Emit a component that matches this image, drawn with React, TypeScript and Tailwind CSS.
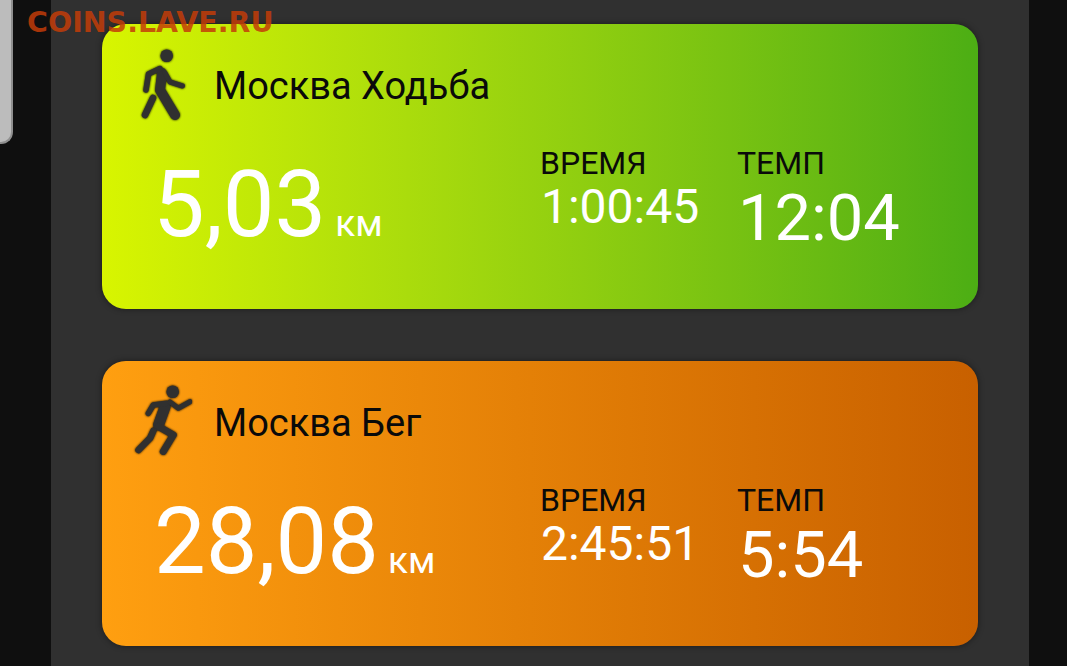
const WalkIcon = () => (
  <svg width="60" height="72" viewBox="0 0 60 72" fill="none" className="block drop-shadow-[0_0_1px_#000]">
    <circle cx="34.7" cy="7.7" r="6.3" fill="#303030" />
    <path d="M30 25 L28 42 L43 67" stroke="#303030" strokeWidth="10" strokeLinecap="round" strokeLinejoin="round" />
    <path d="M28 20.5 L16.5 26 L14 42" stroke="#303030" strokeWidth="5.5" strokeLinecap="round" strokeLinejoin="round" />
    <path d="M33 25 L38 34 L50.5 38" stroke="#303030" strokeWidth="5" strokeLinecap="round" strokeLinejoin="round" />
    <path d="M21 50 L13 67" stroke="#303030" strokeWidth="6.5" strokeLinecap="round" />
  </svg>
);

const RunIcon = () => (
  <svg width="60" height="72" viewBox="0 0 60 72" fill="none" className="block drop-shadow-[0_0_1px_#000]">
    <circle cx="40.7" cy="6.7" r="6.3" fill="#303030" />
    <path d="M33 22 L26.5 40" stroke="#303030" strokeWidth="11" strokeLinecap="round" />
    <path d="M26.5 41.5 L41.3 50 L31.3 66.5" stroke="#303030" strokeWidth="7" strokeLinecap="round" strokeLinejoin="round" />
    <path d="M34.7 18.3 L21.3 20 L16.3 28.3" stroke="#303030" strokeWidth="5.5" strokeLinecap="round" strokeLinejoin="round" />
    <path d="M38 17 L46.3 23.3 L58 16.7" stroke="#303030" strokeWidth="5" strokeLinecap="round" strokeLinejoin="round" />
    <path d="M21.3 46 L18 53.3 L6.5 65" stroke="#303030" strokeWidth="6.5" strokeLinecap="round" strokeLinejoin="round" />
  </svg>
);

type ActivityCardPropsT = {
  title: string;
  icon: React.ReactNode;
  distance: string;
  distanceClass: string;
  time: string;
  pace: string;
  gradient: string;
  spaced?: boolean;
};

const ActivityCard = ({
  title,
  icon,
  distance,
  distanceClass,
  time,
  pace,
  gradient,
  spaced,
}: ActivityCardPropsT) => (
  <div className={`h-[285px] rounded-[24px] pl-[30px] pt-[24px] shadow-[0_0_6px_rgba(0,0,0,0.45)] ${gradient} ${spaced ? "mt-[52px]" : ""}`}>
    {/* Titulo */}
    <div className="flex items-center h-[72px]">
      <div className="w-[83px] shrink-0">{icon}</div>
      <span className="text-[38px] leading-[72px] text-[#0a0a0a] mt-[4px] -ml-[1px]">{title}</span>
    </div>

    {/* Datos */}
    <div className="grid grid-cols-[409px_197px_1fr] mt-[25px]">
      <div className={`flex items-baseline text-white pt-[10px] ${distanceClass}`}>
        <span className="text-[92px] leading-[100px]">{distance}</span>
        <span className="text-[37px] ml-[9px] leading-none">км</span>
      </div>
      <div>
        <p className="text-[32px] leading-[36px] text-[#0a0a0a] -ml-[1px]">ВРЕМЯ</p>
        <p className="text-[48px] leading-[52px] text-white">{time}</p>
      </div>
      <div>
        <p className="text-[32px] leading-[36px] text-[#0a0a0a] -ml-[1px]">ТЕМП</p>
        <p className="text-[65px] leading-[72px] text-white mt-[1px]">{pace}</p>
      </div>
    </div>
  </div>
);

export default function App() {
  return (
    <div className="relative h-[666px] w-[1067px] overflow-hidden bg-[#0f0f0f] font-['Roboto',sans-serif]">
      <div className="ml-[51px] mr-[38px] h-full bg-[#303030] px-[51px] pt-[24px]">
        <ActivityCard
          title="Москва Ходьба"
          icon={<WalkIcon />}
          distance="5,03"
          distanceClass="pl-[21px]"
          time="1:00:45"
          pace="12:04"
          gradient="bg-gradient-to-r from-[#d8f500] to-[#4cae14]"
        />
        <ActivityCard
          spaced
          title="Москва Бег"
          icon={<RunIcon />}
          distance="28,08"
          distanceClass="pl-[22px]"
          time="2:45:51"
          pace="5:54"
          gradient="bg-gradient-to-r from-[#ff9f10] to-[#c86000]"
        />
      </div>

      {/* Panel lateral que asoma y marca de agua */}
      <div className="absolute left-0 top-0 h-[144px] w-[13px] rounded-br-[12px] border-r-[2px] border-b-[2px] border-[#8f8f8f] bg-[#bcbcbc]" />
      <span className="absolute left-[27px] top-[8px] text-[28.5px] leading-[30px] font-bold text-[#c43c08]/85 font-['DejaVu_Sans',sans-serif]">
        COINS.LAVE.RU
      </span>
    </div>
  );
}
